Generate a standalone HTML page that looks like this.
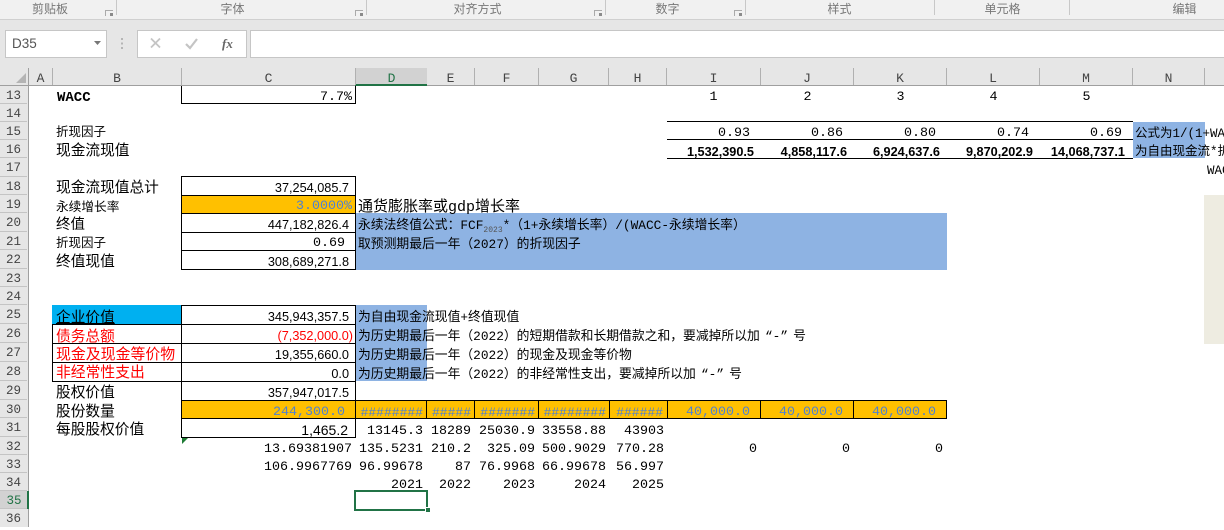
<!DOCTYPE html>
<html lang="zh"><head><meta charset="utf-8"><style>
html,body{margin:0;padding:0}
body{width:1224px;height:527px;overflow:hidden;background:#fff;position:relative;font-family:"Liberation Mono","WenQuanYi Zen Hei",monospace;font-size:13.33px;color:#000}
div{position:absolute}
.b{background:#000}
.t,.r,.c{white-space:nowrap;line-height:18px;height:18px;margin-top:2px}
.r{left:0;text-align:right}
.c{text-align:center}
.z{font-family:"Liberation Mono","WenQuanYi Zen Hei",sans-serif}
.a{font-family:"Liberation Sans",sans-serif;font-size:12.7px}
.ab{font-family:"Liberation Sans",sans-serif;font-size:12.7px;font-weight:bold}
.n{font-size:12.8px}
.k{color:#4f81d0}
.q1,.q2{display:inline-block;width:12.8px}
.q1{text-align:right}
.q2{text-align:left}
.rh{left:0;width:27px;text-align:center;font-size:12.5px;color:#444;border-bottom:1px solid #c4c4c4;background:#e6e6e6;line-height:21px;box-sizing:border-box}
.ch{top:68px;height:17px;text-align:center;font-size:13px;color:#444;line-height:21px;border-right:1px solid #b0b0b0;box-sizing:border-box}
.rb{top:2px;font-size:12px;color:#777;line-height:14px;font-family:"WenQuanYi Zen Hei",sans-serif;text-align:center}
.sp{top:0;width:1px;height:15px;background:#c8c8c8}
.ic{top:10px;width:7px;height:5px;border-left:1px solid #aaa;border-top:1px solid #aaa}
.ic:after{content:"";position:absolute;right:0;bottom:0;width:3px;height:3px;background:#8a8a8a}
</style></head><body>
<!-- ribbon -->
<div style="left:0;top:0;width:1224px;height:19px;background:#f1f1f1;border-bottom:1px solid #d0d0d0"></div>
<div style="left:0;top:20px;width:1224px;height:48px;background:#e6e6e6"></div>
<div class="rb" style="left:0;width:100px">剪贴板</div>
<div class="rb" style="left:180px;width:105px">字体</div>
<div class="rb" style="left:425px;width:105px">对齐方式</div>
<div class="rb" style="left:615px;width:105px">数字</div>
<div class="rb" style="left:787px;width:105px">样式</div>
<div class="rb" style="left:950px;width:105px">单元格</div>
<div class="rb" style="left:1132px;width:105px">编辑</div>
<div class="sp" style="left:116px"></div><div class="sp" style="left:366px"></div><div class="sp" style="left:605px"></div><div class="sp" style="left:745px"></div><div class="sp" style="left:934px"></div><div class="sp" style="left:1069px"></div>
<div class="ic" style="left:105px"></div><div class="ic" style="left:355px"></div><div class="ic" style="left:594px"></div><div class="ic" style="left:734px"></div>
<!-- formula bar -->
<div style="left:5px;top:30px;width:100px;height:26px;background:#fff;border:1px solid #c6c6c6"></div>
<div style="left:12px;top:35px;font:13.5px/18px 'Liberation Sans',sans-serif;color:#555">D35</div>
<svg style="position:absolute;left:90px;top:38px" width="14" height="10"><path d="M4 3h7l-3.500 4z" fill="#777"/></svg>
<svg style="position:absolute;left:120px;top:37px" width="4" height="13"><path d="M1 1h2v2H1zM1 5.500h2v2H1zM1 10h2v2H1z" fill="#b5b5b5"/></svg>
<div style="left:137px;top:30px;width:108px;height:26px;background:#fff;border:1px solid #c6c6c6"></div>
<svg style="position:absolute;left:148px;top:36px" width="50" height="16"><path d="M3 2.500l9 9M12 2.500l-9 9" stroke="#c4c4c4" stroke-width="1.800" fill="none"/><path d="M38 8l4 4 7-9" stroke="#c4c4c4" stroke-width="2.200" fill="none"/></svg>
<div style="left:222px;top:35px;font:italic bold 13px/18px 'Liberation Serif',serif;color:#666">fx</div>
<div style="left:250px;top:30px;width:980px;height:26px;background:#fff;border:1px solid #c6c6c6"></div>
<!-- column header -->
<div style="left:0;top:68px;width:1224px;height:17px;background:#e6e6e6;border-bottom:1px solid #9f9f9f"></div>
<svg style="position:absolute;left:14px;top:71px" width="13" height="13"><path d="M12 2v10H2z" fill="#b4b4b4"/></svg>
<div style="left:355px;top:68px;width:72px;height:16px;background:#d2d2d2"></div>
<div style="left:355px;top:84px;width:72px;height:2px;background:#217346"></div>
<div class="ch" style="left:29px;width:24px">A</div><div class="ch" style="left:53px;width:129px">B</div><div class="ch" style="left:182px;width:174px">C</div><div class="ch" style="left:356px;width:71px;color:#217346;border:0">D</div><div class="ch" style="left:427px;width:48px">E</div><div class="ch" style="left:475px;width:64px">F</div><div class="ch" style="left:539px;width:70px">G</div><div class="ch" style="left:609px;width:58px">H</div><div class="ch" style="left:667px;width:94px">I</div><div class="ch" style="left:761px;width:93px">J</div><div class="ch" style="left:854px;width:93px">K</div><div class="ch" style="left:947px;width:93px">L</div><div class="ch" style="left:1040px;width:93px">M</div><div class="ch" style="left:1133px;width:72px">N</div>
<!-- row gutter -->
<div style="left:0;top:86px;width:29px;height:441px;background:#e6e6e6"></div>
<div style="left:28px;top:68px;width:1px;height:459px;background:#9f9f9f"></div>
<div class="rh" style="top:86px;height:18px">13</div><div class="rh" style="top:104px;height:18px">14</div><div class="rh" style="top:122px;height:18px">15</div><div class="rh" style="top:140px;height:18px">16</div><div class="rh" style="top:158px;height:19px">17</div><div class="rh" style="top:177px;height:18px">18</div><div class="rh" style="top:195px;height:18px">19</div><div class="rh" style="top:213px;height:19px">20</div><div class="rh" style="top:232px;height:18px">21</div><div class="rh" style="top:250px;height:19px">22</div><div class="rh" style="top:269px;height:18px">23</div><div class="rh" style="top:287px;height:18px">24</div><div class="rh" style="top:305px;height:19px">25</div><div class="rh" style="top:324px;height:19px">26</div><div class="rh" style="top:343px;height:19px">27</div><div class="rh" style="top:362px;height:19px">28</div><div class="rh" style="top:381px;height:19px">29</div><div class="rh" style="top:400px;height:18px">30</div><div class="rh" style="top:418px;height:19px">31</div><div class="rh" style="top:437px;height:18px">32</div><div class="rh" style="top:455px;height:18px">33</div><div class="rh" style="top:473px;height:18px">34</div><div class="rh" style="top:491px;height:18px;background:#d2d2d2;color:#217346;width:28px">35</div><div class="rh" style="top:509px;height:18px;border:0">36</div>
<div style="left:27px;top:491px;width:2px;height:18px;background:#217346"></div>
<!-- fills -->
<div style="left:356px;top:213px;width:591px;height:57px;background:#8eb3e3"></div>
<div style="left:356px;top:305px;width:71px;height:76px;background:#8eb3e3"></div>
<div style="left:1133px;top:122px;width:72px;height:36px;background:#8eb3e3"></div>
<div style="left:181px;top:195px;width:174px;height:18px;background:#ffc000"></div>
<div style="left:181px;top:400px;width:766px;height:18px;background:#ffc000"></div>
<div style="left:52px;top:305px;width:129px;height:19px;background:#00b0f0"></div>
<div style="left:1204px;top:195px;width:20px;height:149px;background:#eeece1"></div>
<!-- borders -->
<div class="b" style="left:181px;top:86px;width:1px;height:18px"></div><div class="b" style="left:355px;top:86px;width:1px;height:18px"></div><div class="b" style="left:181px;top:103px;width:175px;height:1px"></div>
<div class="b" style="left:667px;top:121px;width:466px;height:1px"></div><div class="b" style="left:667px;top:139px;width:466px;height:1px"></div><div class="b" style="left:667px;top:158px;width:466px;height:1px"></div>
<div class="b" style="left:181px;top:176px;width:175px;height:1px"></div><div class="b" style="left:181px;top:195px;width:175px;height:1px"></div><div class="b" style="left:181px;top:213px;width:175px;height:1px"></div><div class="b" style="left:181px;top:232px;width:175px;height:1px"></div><div class="b" style="left:181px;top:250px;width:175px;height:1px"></div><div class="b" style="left:181px;top:269px;width:175px;height:1px"></div>
<div class="b" style="left:181px;top:176px;width:1px;height:94px"></div><div class="b" style="left:355px;top:176px;width:1px;height:94px"></div>
<div class="b" style="left:181px;top:305px;width:175px;height:1px"></div><div class="b" style="left:52px;top:324px;width:304px;height:1px"></div><div class="b" style="left:52px;top:343px;width:304px;height:1px"></div><div class="b" style="left:52px;top:362px;width:304px;height:1px"></div><div class="b" style="left:52px;top:381px;width:304px;height:1px"></div>
<div class="b" style="left:181px;top:400px;width:766px;height:1px"></div><div class="b" style="left:181px;top:418px;width:766px;height:1px"></div><div class="b" style="left:181px;top:437px;width:175px;height:1px"></div>
<div class="b" style="left:181px;top:305px;width:1px;height:133px"></div><div class="b" style="left:355px;top:305px;width:1px;height:133px"></div><div class="b" style="left:52px;top:324px;width:1px;height:58px"></div>
<div class="b" style="left:426px;top:400px;width:1px;height:19px"></div><div class="b" style="left:474px;top:400px;width:1px;height:19px"></div><div class="b" style="left:538px;top:400px;width:1px;height:19px"></div><div class="b" style="left:609px;top:400px;width:1px;height:19px"></div><div class="b" style="left:667px;top:400px;width:1px;height:19px"></div><div class="b" style="left:760px;top:400px;width:1px;height:19px"></div><div class="b" style="left:853px;top:400px;width:1px;height:19px"></div><div class="b" style="left:946px;top:400px;width:1px;height:19px"></div>
<svg style="position:absolute;left:182px;top:438px" width="6" height="6"><path d="M0 0h6L0 6z" fill="#1e7b34"/></svg>
<!-- B labels -->
<div class="t" style="left:57px;top:87px;font-weight:bold;font-size:14px">WACC</div>
<div class="t z" style="left:56px;top:122px;font-size:12.5px">折现因子</div>
<div class="t z" style="left:56px;top:141px;font-size:14.7px">现金流现值</div>
<div class="t z" style="left:56px;top:178px;font-size:14.7px">现金流现值总计</div>
<div class="t z" style="left:56px;top:197px;font-size:12.7px">永续增长率</div>
<div class="t z" style="left:56px;top:215px;font-size:14.5px">终值</div>
<div class="t z" style="left:56px;top:233px;font-size:12.5px">折现因子</div>
<div class="t z" style="left:56px;top:252px;font-size:14.7px">终值现值</div>
<div class="t z" style="left:56px;top:308px;font-size:14.7px;text-decoration:underline">企业价值</div>
<div class="t z" style="left:56px;top:327px;font-size:14.7px;color:#f00">债务总额</div>
<div class="t z" style="left:56px;top:345px;font-size:14.9px;color:#f00">现金及现金等价物</div>
<div class="t z" style="left:56px;top:363px;font-size:14.8px;color:#f00">非经常性支出</div>
<div class="t z" style="left:56px;top:383px;font-size:14.7px">股权价值</div>
<div class="t z" style="left:56px;top:402px;font-size:14.7px">股份数量</div>
<div class="t z" style="left:56px;top:420px;font-size:14.7px">每股股权价值</div>
<!-- C values -->
<div class="r" style="top:87px;width:352px">7.7%</div>
<div class="r a" style="top:177px;width:349px">37,254,085.7</div>
<div class="r k" style="top:196px;width:352px">3.0000%</div>
<div class="r a" style="top:214px;width:349px">447,182,826.4</div>
<div class="r" style="top:233px;width:345px">0.69</div>
<div class="r a" style="top:251px;width:349px">308,689,271.8</div>
<div class="r a" style="top:306px;width:349px">345,943,357.5</div>
<div class="r a" style="top:325px;width:353px;color:#f00">(7,352,000.0)</div>
<div class="r a" style="top:344px;width:349px">19,355,660.0</div>
<div class="r a" style="top:363px;width:349px">0.0</div>
<div class="r a" style="top:382px;width:349px">357,947,017.5</div>
<div class="r k" style="top:402px;width:345px">244,300.0</div>
<div class="r a" style="top:419px;width:348px;font-size:14px">1,465.2</div>
<!-- notes -->
<div class="t z" style="left:358px;top:197px;font-size:15px">通货膨胀率或gdp增长率</div>
<div class="t z n" style="left:358px;top:215px">永续法终值公式：FCF<span style="font-size:8px;color:#555;position:relative;top:3px">2023</span>*（1+永续增长率）/(WACC-永续增长率）</div>
<div class="t z n" style="left:358px;top:234px">取预测期最后一年（2027）的折现因子</div>
<div class="t z n" style="left:358px;top:307px">为自由现金流现值+终值现值</div>
<div class="t z n" style="left:358px;top:326px">为历史期最后一年（2022）的短期借款和长期借款之和，要减掉所以加<span class="q1">“</span>-<span class="q2">”</span>号</div>
<div class="t z n" style="left:358px;top:345px">为历史期最后一年（2022）的现金及现金等价物</div>
<div class="t z n" style="left:358px;top:364px">为历史期最后一年（2022）的非经常性支出，要减掉所以加<span class="q1">“</span>-<span class="q2">”</span>号</div>
<!-- I:N -->
<div class="c" style="left:667px;width:93px;top:87px">1</div><div class="c" style="left:761px;width:93px;top:87px">2</div><div class="c" style="left:854px;width:93px;top:87px">3</div><div class="c" style="left:947px;width:93px;top:87px">4</div><div class="c" style="left:1040px;width:93px;top:87px">5</div>
<div class="r" style="top:123px;width:750px">0.93</div><div class="r" style="top:123px;width:843px">0.86</div><div class="r" style="top:123px;width:936px">0.80</div><div class="r" style="top:123px;width:1029px">0.74</div><div class="r" style="top:123px;width:1122px">0.69</div>
<div class="r ab" style="top:141px;width:754px">1,532,390.5</div><div class="r ab" style="top:141px;width:847px">4,858,117.6</div><div class="r ab" style="top:141px;width:940px">6,924,637.6</div><div class="r ab" style="top:141px;width:1033px">9,870,202.9</div><div class="r ab" style="top:141px;width:1125px">14,068,737.1</div>
<div class="t z" style="left:1135px;top:123px;font-size:12.5px">公式为1/(1+WACC</div>
<div class="t z" style="left:1135px;top:141px;font-size:12.5px">为自由现金流*折</div>
<div class="t" style="left:1207px;top:160px;font-size:12.5px">WACC</div>
<!-- row 30 -->
<div class="r k" style="top:402px;width:423px;font-size:13px">########</div><div class="r k" style="top:402px;width:471px;font-size:13px">#####</div><div class="r k" style="top:402px;width:535px;font-size:13px">#######</div><div class="r k" style="top:402px;width:606px;font-size:13px">########</div><div class="r k" style="top:402px;width:663px;font-size:13px">######</div>
<div class="r k" style="top:402px;width:750px">40,000.0</div><div class="r k" style="top:402px;width:843px">40,000.0</div><div class="r k" style="top:402px;width:936px">40,000.0</div>
<!-- rows 31-34 -->
<div class="r" style="top:421px;width:423px">13145.3</div><div class="r" style="top:421px;width:471px">18289</div><div class="r" style="top:421px;width:535px">25030.9</div><div class="r" style="top:421px;width:606px">33558.88</div><div class="r" style="top:421px;width:664px">43903</div>
<div class="r" style="top:439px;width:352px">13.69381907</div><div class="r" style="top:439px;width:423px">135.5231</div><div class="r" style="top:439px;width:471px">210.2</div><div class="r" style="top:439px;width:535px">325.09</div><div class="r" style="top:439px;width:606px">500.9029</div><div class="r" style="top:439px;width:664px">770.28</div><div class="r" style="top:439px;width:757px">0</div><div class="r" style="top:439px;width:850px">0</div><div class="r" style="top:439px;width:943px">0</div>
<div class="r" style="top:457px;width:352px">106.9967769</div><div class="r" style="top:457px;width:423px">96.99678</div><div class="r" style="top:457px;width:471px">87</div><div class="r" style="top:457px;width:535px">76.9968</div><div class="r" style="top:457px;width:606px">66.99678</div><div class="r" style="top:457px;width:664px">56.997</div>
<div class="r" style="top:475px;width:423px">2021</div><div class="r" style="top:475px;width:471px">2022</div><div class="r" style="top:475px;width:535px">2023</div><div class="r" style="top:475px;width:606px">2024</div><div class="r" style="top:475px;width:664px">2025</div>
<!-- selection -->
<div style="left:354px;top:490px;width:70px;height:17px;border:2px solid #217346;background:transparent"></div>
<div style="left:425px;top:507px;width:5px;height:5px;background:#217346;border-left:1px solid #fff;border-top:1px solid #fff;box-sizing:border-box"></div>
</body></html>
